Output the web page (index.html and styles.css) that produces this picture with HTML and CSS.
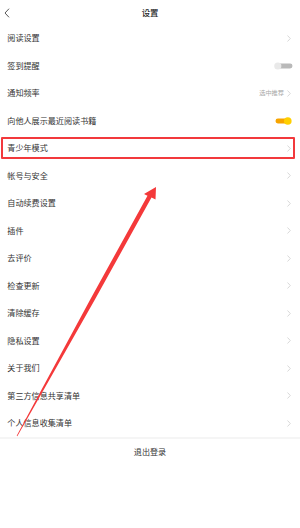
FILE: index.html
```html
<!DOCTYPE html>
<html lang="zh-CN">
<head>
<meta charset="utf-8">
<title>设置</title>
<link rel="stylesheet" href="styles.css">
</head>
<body>
<div class="screen">
  <header class="nav">
    <svg class="back" width="6" height="10" viewBox="0 0 6 10"><path d="M5 0.7 L1 5 L5 9.3" fill="none" stroke="#444" stroke-width="0.9"/></svg>
    <h1 class="title">设置</h1>
  </header>
  <ul class="list">
    <li class="row"><span class="label">阅读设置</span><svg class="chev" width="4" height="7" viewBox="0 0 4 7"><path d="M0.5 0.5 L3.3 3.5 L0.5 6.5" fill="none" stroke="#c9c9c9" stroke-width="0.7"/></svg></li>
    <li class="row"><span class="label">签到提醒</span><svg class="switch" width="19" height="8" viewBox="0 0 19 8"><rect x="2" y="1.6" width="16.5" height="4.8" rx="2.4" fill="#b9b9b9"/><circle cx="3.8" cy="4" r="3.6" fill="#e9e9e9"/></svg></li>
    <li class="row"><span class="label">通知频率</span><span class="extra"><span class="hint">选中推荐</span><svg class="chev" width="4" height="7" viewBox="0 0 4 7"><path d="M0.5 0.5 L3.3 3.5 L0.5 6.5" fill="none" stroke="#c9c9c9" stroke-width="0.7"/></svg></span></li>
    <li class="row"><span class="label">向他人展示最近阅读书籍</span><svg class="switch on" width="17" height="8" viewBox="0 0 17 8"><rect x="0.5" y="1.6" width="14" height="4.8" rx="2.4" fill="#f7a400"/><circle cx="12.8" cy="4" r="3.8" fill="#ffcf00"/></svg></li>
    <li class="row"><span class="label">青少年模式</span><svg class="chev" width="4" height="7" viewBox="0 0 4 7"><path d="M0.5 0.5 L3.3 3.5 L0.5 6.5" fill="none" stroke="#c9c9c9" stroke-width="0.7"/></svg></li>
    <li class="row"><span class="label">帐号与安全</span><svg class="chev" width="4" height="7" viewBox="0 0 4 7"><path d="M0.5 0.5 L3.3 3.5 L0.5 6.5" fill="none" stroke="#c9c9c9" stroke-width="0.7"/></svg></li>
    <li class="row"><span class="label">自动续费设置</span><svg class="chev" width="4" height="7" viewBox="0 0 4 7"><path d="M0.5 0.5 L3.3 3.5 L0.5 6.5" fill="none" stroke="#c9c9c9" stroke-width="0.7"/></svg></li>
    <li class="row"><span class="label">插件</span><svg class="chev" width="4" height="7" viewBox="0 0 4 7"><path d="M0.5 0.5 L3.3 3.5 L0.5 6.5" fill="none" stroke="#c9c9c9" stroke-width="0.7"/></svg></li>
    <li class="row"><span class="label">去评价</span><svg class="chev" width="4" height="7" viewBox="0 0 4 7"><path d="M0.5 0.5 L3.3 3.5 L0.5 6.5" fill="none" stroke="#c9c9c9" stroke-width="0.7"/></svg></li>
    <li class="row"><span class="label">检查更新</span><svg class="chev" width="4" height="7" viewBox="0 0 4 7"><path d="M0.5 0.5 L3.3 3.5 L0.5 6.5" fill="none" stroke="#c9c9c9" stroke-width="0.7"/></svg></li>
    <li class="row"><span class="label">清除缓存</span><svg class="chev" width="4" height="7" viewBox="0 0 4 7"><path d="M0.5 0.5 L3.3 3.5 L0.5 6.5" fill="none" stroke="#c9c9c9" stroke-width="0.7"/></svg></li>
    <li class="row"><span class="label">隐私设置</span><svg class="chev" width="4" height="7" viewBox="0 0 4 7"><path d="M0.5 0.5 L3.3 3.5 L0.5 6.5" fill="none" stroke="#c9c9c9" stroke-width="0.7"/></svg></li>
    <li class="row"><span class="label">关于我们</span><svg class="chev" width="4" height="7" viewBox="0 0 4 7"><path d="M0.5 0.5 L3.3 3.5 L0.5 6.5" fill="none" stroke="#c9c9c9" stroke-width="0.7"/></svg></li>
    <li class="row"><span class="label">第三方信息共享清单</span><svg class="chev" width="4" height="7" viewBox="0 0 4 7"><path d="M0.5 0.5 L3.3 3.5 L0.5 6.5" fill="none" stroke="#c9c9c9" stroke-width="0.7"/></svg></li>
    <li class="row"><span class="label">个人信息收集清单</span><svg class="chev" width="4" height="7" viewBox="0 0 4 7"><path d="M0.5 0.5 L3.3 3.5 L0.5 6.5" fill="none" stroke="#c9c9c9" stroke-width="0.7"/></svg></li>
  </ul>
  <div class="logout">退出登录</div>

  <div class="highlight"></div>
  <svg class="arrow" width="300" height="528" viewBox="0 0 300 528">
    <polygon fill="#f4393a" points="156,187 155.5,199.5 151.5,197.6 94.1,301 37.6,400.4 17.3,436.2 16.7,435.8 36.2,399.6 90.5,299 147.5,195.8 144,194"/>
  </svg>
</div>
</body>
</html>
```

FILE: styles.css
```css
* { box-sizing: border-box; }
html, body {
  margin: 0;
  padding: 0;
  background: #ffffff;
}
.screen {
  position: relative;
  width: 300px;
  height: 528px;
  overflow: hidden;
  background: #ffffff;
  font-family: "Noto Sans CJK SC", "Noto Sans", sans-serif;
  color: #333333;
}
.nav {
  position: relative;
  height: 24.5px;
  display: flex;
  align-items: center;
  justify-content: center;
}
.back {
  position: absolute;
  left: 4px;
  top: 7.5px;
}
.title {
  margin: 0;
  font-size: 8.4px;
  font-weight: 500;
  color: #222222;
  line-height: 1;
}
.list {
  list-style: none;
  margin: 0;
  padding: 0;
}
.row {
  height: 27.5px;
  display: flex;
  align-items: center;
  justify-content: space-between;
  padding: 0 8px 0 7.3px;
}
.label {
  font-size: 8.1px;
  line-height: 1;
  color: #333333;
}
.chev {
  display: block;
  margin-right: 1px;
}
.extra {
  display: flex;
  align-items: center;
  gap: 3px;
}
.hint {
  font-size: 6.2px;
  line-height: 1;
  color: #a8a8a8;
}
.switch {
  display: block;
  margin-right: -1px;
}
.switch.on {
  margin-right: 0;
}
.logout {
  border-top: 2px solid #f5f5f5;
  height: 28px;
  display: flex;
  align-items: center;
  justify-content: center;
  font-size: 8.1px;
  line-height: 1;
  color: #333333;
}
.highlight {
  position: absolute;
  left: 1px;
  top: 137px;
  width: 294px;
  height: 22px;
  border: 2px solid #f2393c;
  border-radius: 1px;
}
.arrow {
  position: absolute;
  left: 0;
  top: 0;
  pointer-events: none;
}
```
